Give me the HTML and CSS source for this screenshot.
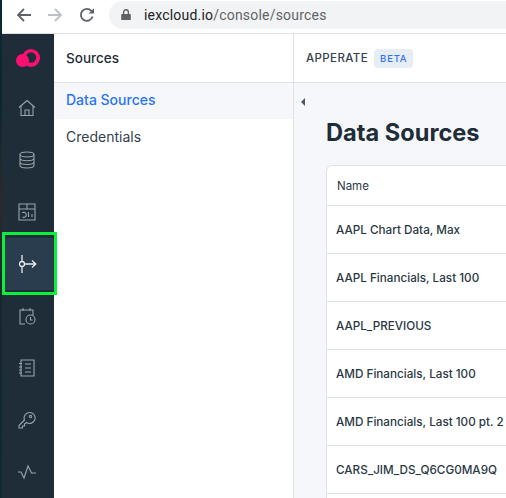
FILE: index.html
```html
<!DOCTYPE html>
<html lang="en">
<head>
<meta charset="utf-8">
<title>Sources</title>
<link rel="stylesheet" href="styles.css">
</head>
<body>
<div class="wallpaper"></div>
<div class="window">
  <header class="toolbar">
    <svg class="nav-icon" viewBox="0 0 16 16"><path d="M15 8H2M8 2 2 8l6 6"/></svg>
    <svg class="nav-icon nav-off" viewBox="0 0 16 16"><path d="M1 8h13M8 2l6 6-6 6"/></svg>
    <svg class="nav-icon nav-reload" viewBox="0 0 16 16"><path d="M13.6 9.6A6 6 0 1 1 12.4 3.9L14 5.5"/><path class="fill" d="M15 1.2V6.6H9.6Z"/></svg>
    <div class="address">
      <svg class="lock" viewBox="0 0 10 12"><path d="M1 5h8a.8.8 0 0 1 .8.8v5.2H.2V5.800A.8.8 0 0 1 1 5Z"/><path class="shackle" d="M2.600 5V3.200a2.400 2.400 0 0 1 4.800 0V5"/></svg>
      <span class="host">iexcloud.io</span><span class="path">/console/sources</span>
    </div>
  </header>
  <div class="app">
    <nav class="rail">
      <div class="logo-row">
        <svg class="logo" viewBox="0 0 24 18"><circle cx="15" cy="9" r="9"/><circle class="logo-hole" cx="15" cy="8.500" r="5.200"/><circle cx="6.500" cy="11.500" r="6.500"/></svg>
      </div>
      <a class="rail-item"><svg viewBox="0 0 18 18"><path d="M1 8.500 9 1.500l8 7M3 7v9.500h12V7M7 16.500v-5.500h4v5.500"/></svg></a>
      <a class="rail-item"><svg viewBox="0 0 18 18"><ellipse cx="9" cy="3.500" rx="7" ry="2.500"/><path d="M2 3.500v11c0 1.400 3.100 2.500 7 2.500s7-1.100 7-2.500v-11M2 7.200c0 1.400 3.100 2.500 7 2.500s7-1.100 7-2.500M2 11c0 1.400 3.100 2.500 7 2.500s7-1.100 7-2.500"/></svg></a>
      <a class="rail-item"><svg viewBox="0 0 18 18"><path d="M1 1h16v16H1zM1 6h16M9 1v5M5 9.500a2.500 2.500 0 1 1-.5 4.500M4 9.500h2M10.500 9v5M14 11v3"/></svg></a>
      <a class="rail-item rail-active"><svg viewBox="0 0 18 18"><path class="bright" d="M3 0v6.500M3 11.500v6.500M5.500 9H17M13 5.500 16.800 9 13 12.500"/><circle class="bright" cx="3" cy="9" r="2.500"/></svg></a>
      <a class="rail-item"><svg viewBox="0 0 18 18"><path d="M7 17H2V3h13v5M5 1v3M12 1v3"/><circle cx="12.500" cy="12.500" r="4.500"/><path d="M12.500 10v3h2"/></svg></a>
      <a class="rail-item"><svg viewBox="0 0 18 18"><path d="M3 1h13v16H3zM1 4.500h3M1 8h3M1 11h3M1 14h3M7 5h6M7 9h6M7 13h6"/></svg></a>
      <a class="rail-item"><svg viewBox="0 0 18 18"><path d="M6.500 9 1 14.500V17h3.500v-2h2v-2l2-1.500A5.500 5.500 0 1 0 6.500 9Z"/><circle cx="12.500" cy="5.500" r="1.200"/></svg></a>
      <a class="rail-item"><svg viewBox="0 0 18 18"><path d="M0 9h3l3 6 4-12 3.500 7H18"/></svg></a>
    </nav>
    <aside class="panel">
      <div class="panel-title">Sources</div>
      <a class="panel-link panel-current">Data Sources</a>
      <a class="panel-link">Credentials</a>
    </aside>
    <main class="main">
      <div class="topbar">
        <span class="brand">APPERATE</span>
        <span class="badge">BETA</span>
      </div>
      <div class="content">
        <div class="collapse"></div>
        <h1>Data Sources</h1>
        <div class="card">
          <div class="row head">Name</div>
          <div class="row">AAPL Chart Data, Max</div>
          <div class="row">AAPL Financials, Last 100</div>
          <div class="row">AAPL_PREVIOUS</div>
          <div class="row">AMD Financials, Last 100</div>
          <div class="row">AMD Financials, Last 100 pt. 2</div>
          <div class="row">CARS_JIM_DS_Q6CG0MA9Q</div>
          <div class="row-tail"></div>
        </div>
      </div>
    </main>
  </div>
</div>
<div class="highlight"></div>
</body>
</html>
```
FILE: styles.css
```css
* { box-sizing: border-box; }
html { height: 498px; overflow: hidden; }
body {
  margin: 0;
  display: flex;
  height: 498px;
  overflow: hidden;
  position: relative;
  background: #fff;
  font-family: Inter, sans-serif;
  color: #1f2d38;
}
.wallpaper {
  flex: 0 0 2px;
  background: linear-gradient(#0b2a35 0, #0b2530 20%, #2b2a28 40%, #12262e 70%, #0d2a33 100%);
}
.window { flex: 1; min-width: 0; display: flex; flex-direction: column; }

.toolbar {
  flex: 0 0 34px;
  display: flex;
  align-items: flex-start;
  background: #fff;
  border-bottom: 1px solid #dfe1e5;
}
.nav-icon {
  width: 16px;
  height: 16px;
  margin: 7px 0 0 14px;
  fill: none;
  stroke: #5f6368;
  stroke-width: 1.8;
  flex: none;
}
.nav-off { stroke: #bdc1c6; margin-left: 15px; }
.nav-reload { margin-left: 16px; }
.nav-reload .fill { fill: #5f6368; stroke: none; }
.address {
  flex: 1;
  height: 28px;
  margin: 1px 0 0 14px;
  padding-left: 12px;
  display: flex;
  align-items: center;
  background: #f1f3f4;
  border-radius: 14px 0 0 14px;
  font: 14px Roboto, sans-serif;
  letter-spacing: .2px;
}
.lock { width: 10px; height: 12px; margin-right: 13px; fill: #5f6368; flex: none; }
.lock .shackle { fill: none; stroke: #5f6368; stroke-width: 1.400; }
.host { color: #202124; }
.path { color: #5f6368; }

.app { flex: 1; min-height: 0; display: flex; }

.rail { flex: 0 0 52px; background: #1f2d38; }
.logo-row { height: 48px; display: flex; align-items: center; justify-content: center; }
.logo { width: 24px; height: 18px; fill: #ff0f73; }
.logo-hole { fill: #1f2d38; }
.rail-item { height: 52px; display: flex; align-items: center; justify-content: center; padding-right: 2px; }
.rail-item svg {
  width: 18px;
  height: 18px;
  fill: none;
  stroke: #9aa4ab;
  stroke-width: 1.100;
}
.rail-active { background: #2a3d4f; padding-right: 0; }
.rail-active .bright { stroke: #e8ecef; stroke-width: 1.300; }

.panel { flex: 0 0 240px; background: #fff; border-right: 1px solid #dde1e8; }
.panel-title {
  height: 49px;
  padding-left: 12px;
  display: flex;
  align-items: center;
  border-bottom: 1px solid #dde1e8;
  font-size: 13.500px;
  font-weight: 500;
}
.panel-link {
  height: 36px;
  margin-bottom: 1px;
  padding: 0 0 3px 12px;
  display: flex;
  align-items: center;
  font-size: 14px;
  color: #33424e;
}
.panel-current { color: #2b74f1; font-weight: 500; background: #f5f7fa; }

.main { flex: 1; min-width: 0; display: flex; flex-direction: column; background: #f5f7fa; }
.topbar {
  flex: 0 0 49px;
  padding-left: 12px;
  display: flex;
  align-items: center;
  gap: 6px;
  background: #fff;
  border-bottom: 1px solid #dde1e8;
}
.brand { font-size: 11.500px; font-weight: 500; letter-spacing: .4px; color: #33424e; }
.badge {
  height: 19px;
  padding: 0 6px;
  display: flex;
  align-items: center;
  background: #e7edf5;
  border-radius: 4px;
  color: #2b74f1;
  font-size: 9.500px;
  font-weight: 500;
  letter-spacing: .8px;
}
.content { position: relative; flex: 1; min-width: 0; min-height: 0; overflow: hidden; padding-left: 32px; }
.collapse {
  position: absolute;
  left: 7px;
  top: 15px;
  border-style: solid;
  border-width: 4px 4px 4px 0;
  border-color: transparent #4a5a68 transparent transparent;
}
h1 { margin: 0; padding-top: 34px; height: 82px; line-height: 32px; font-size: 23.600px; font-weight: 700; color: #1f2d38; }
.card {
  width: 300px;
  background: #fff;
  border: 1px solid #dde1e8;
  border-bottom: 0;
  border-radius: 6px 0 0 0;
}
.row {
  height: 48px;
  padding-left: 9px;
  display: flex;
  align-items: center;
  border-bottom: 1px solid #dde1e8;
  font-size: 11.700px;
  font-weight: 500;
  white-space: nowrap;
  color: #2a3844;
}
.row.head { height: 40px; padding-left: 10px; font-size: 11.500px; font-weight: 400; }
.row-tail { height: 10px; }

.highlight {
  position: absolute;
  left: 2px;
  top: 232px;
  width: 55px;
  height: 63px;
  border: 3px solid #0bf03c;
}
```
